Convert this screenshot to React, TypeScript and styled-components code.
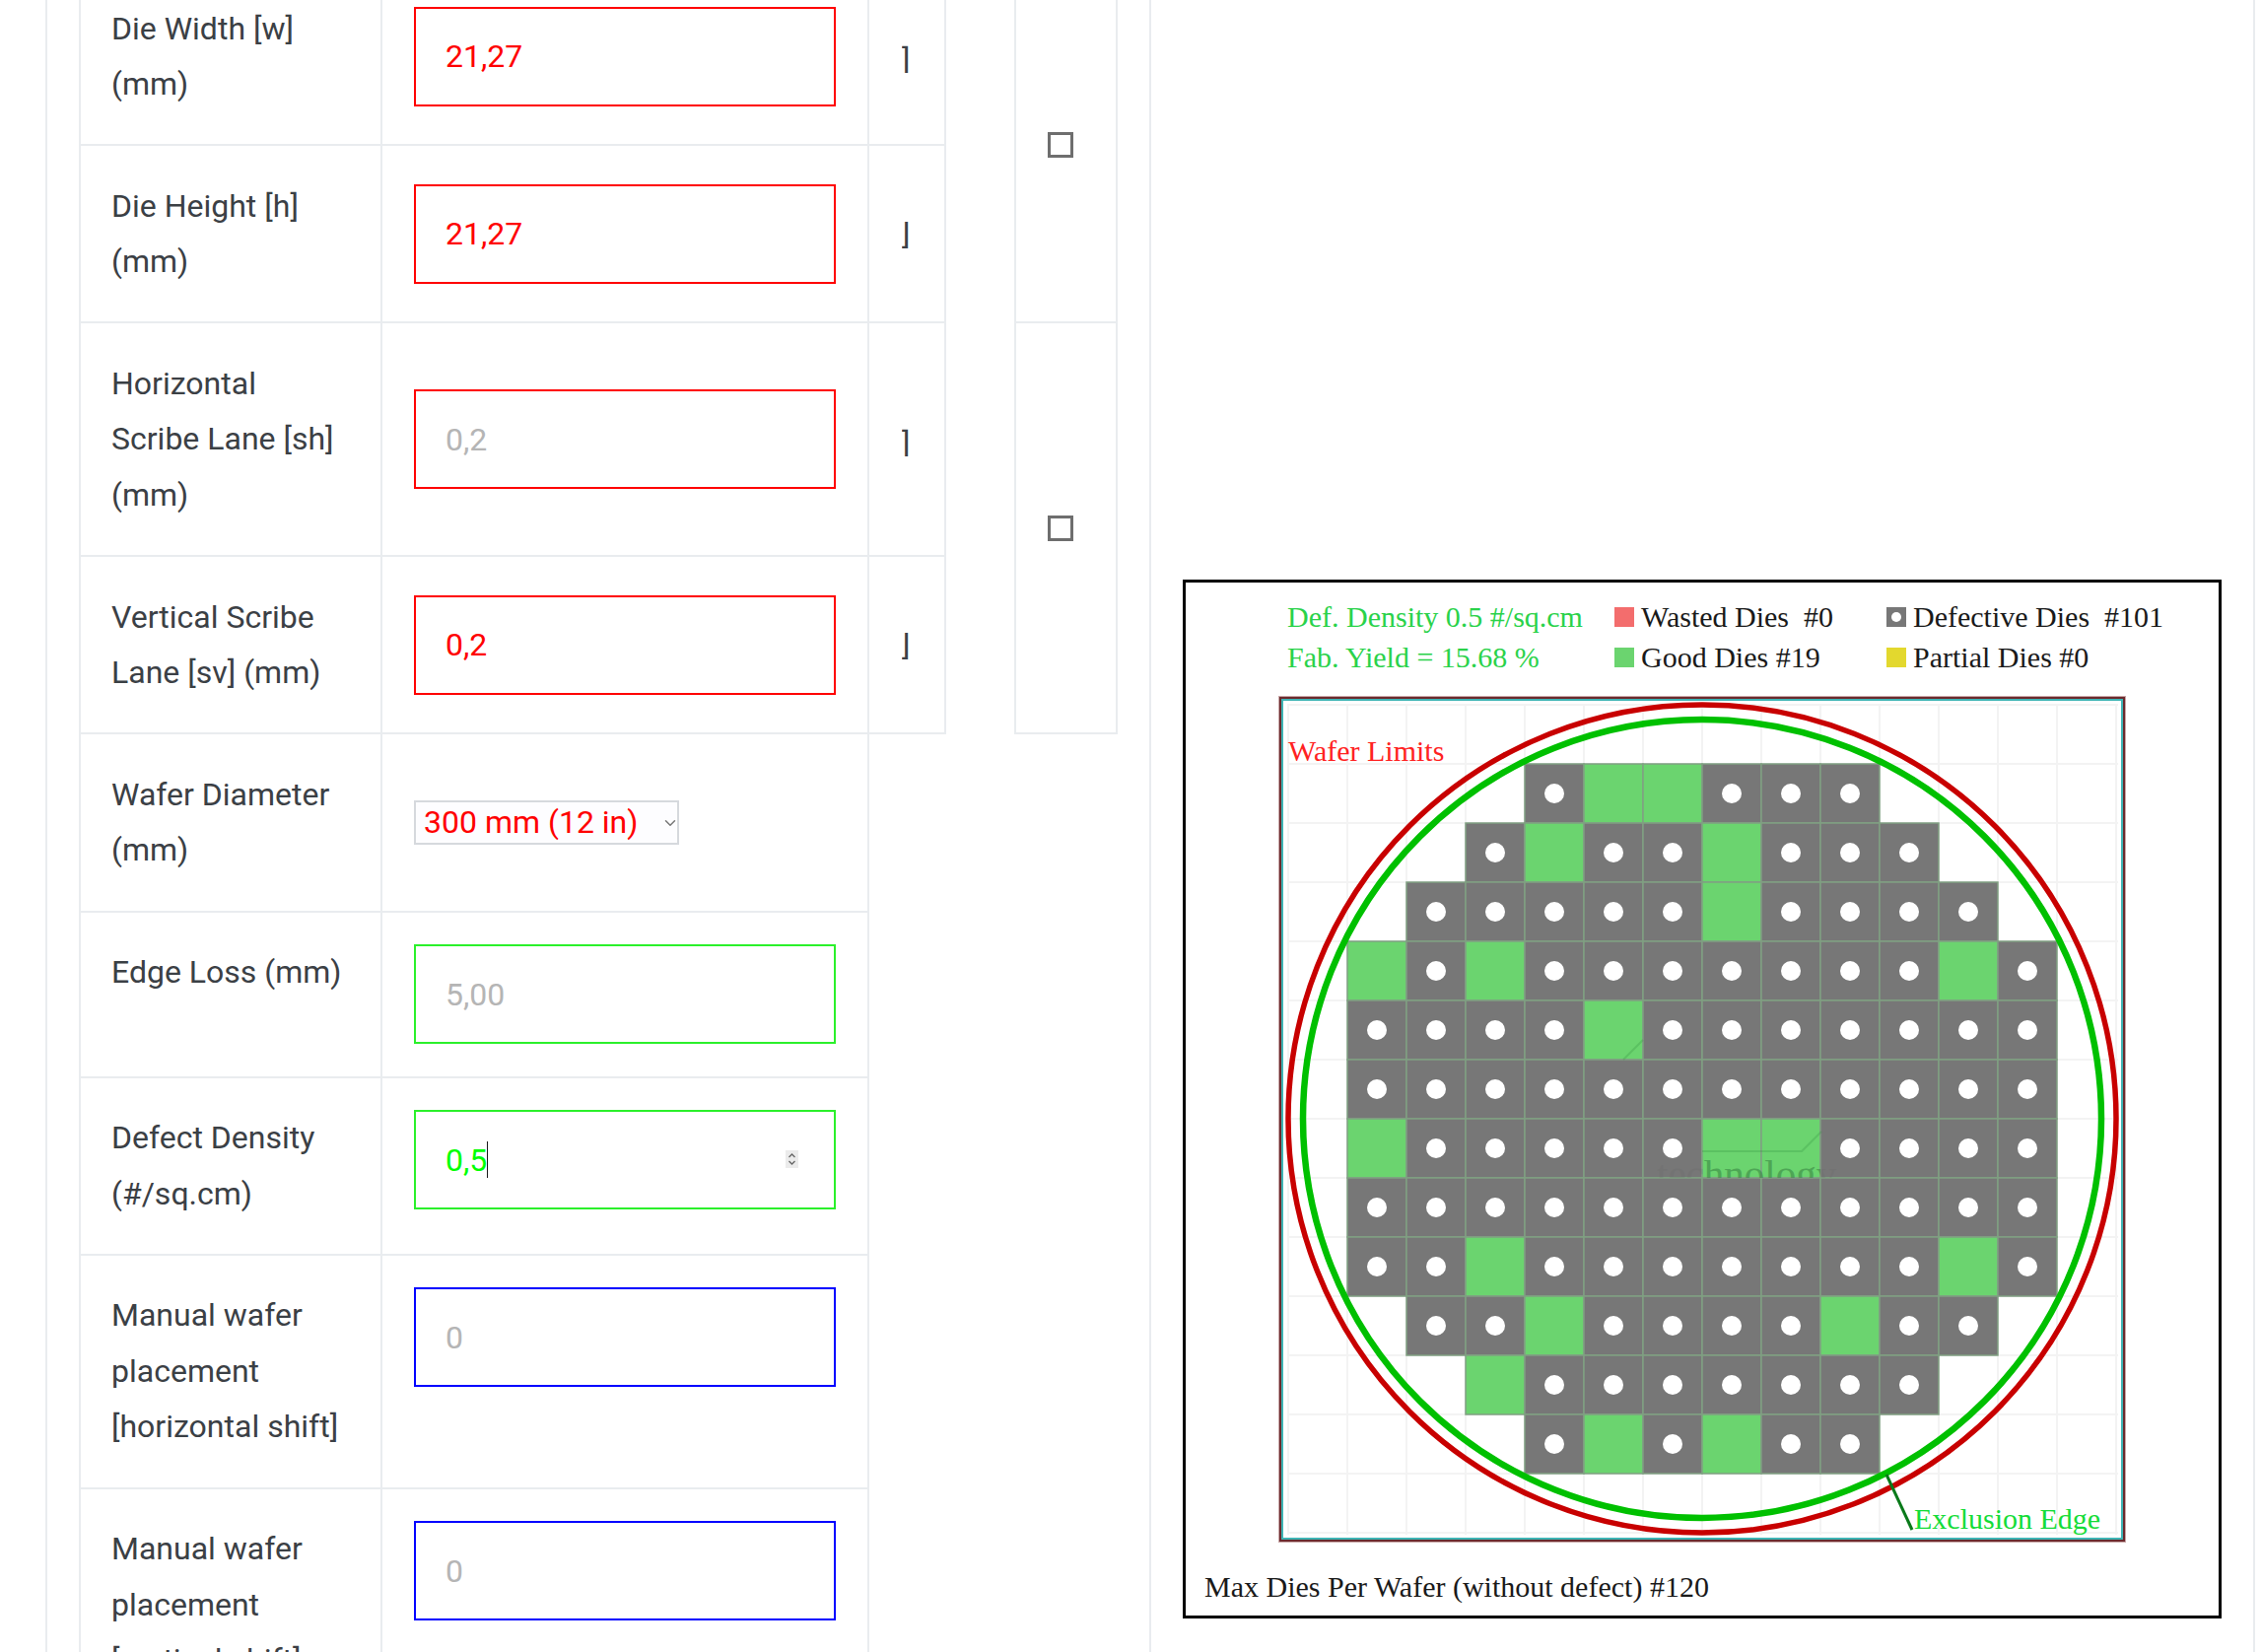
import React from "react";
import styled, { createGlobalStyle } from "styled-components";
import { ChevronDown } from "lucide-react";

const GlobalStyle = createGlobalStyle`
  html, body {
    margin: 0;
    padding: 0;
    background: #fff;
  }
  * {
    box-sizing: border-box;
  }
`;

const LINE = "#e9ecef";

const Page = styled.div`
  display: flex;
  width: 2294px;
  height: 1676px;
  overflow: hidden;
  background: #fff;
  font-family: Roboto, "Liberation Sans", sans-serif;
  font-size: 32px;
  color: #3b4045;
`;

const FormColumn = styled.div`
  width: 1122px;
  height: 100%;
  margin-left: 46px;
  padding-left: 32px;
  border-left: 2px solid ${LINE};
  border-right: 2px solid ${LINE};
`;

const FormGrid = styled.div`
  display: grid;
  grid-template-columns: 308px 494px 78px 69px 105px;
  margin-top: -32px;
`;

const LabelCell = styled.div`
  grid-column: 1;
  padding: 32.5px 31px;
  line-height: 56.6px;
  border-left: 2px solid ${LINE};
  border-right: 2px solid ${LINE};
  border-bottom: 2px solid ${LINE};
`;

const ValueCell = styled.div<{ $top?: boolean }>`
  grid-column: 2;
  display: flex;
  align-items: ${(p) => (p.$top ? "flex-start" : "center")};
  padding: 32.5px 32px;
  border-right: 2px solid ${LINE};
  border-bottom: 2px solid ${LINE};
`;

const UnitCell = styled.div`
  grid-column: 3;
  display: flex;
  align-items: center;
  padding: 5px 0 0 33px;
  border-right: 2px solid ${LINE};
  border-bottom: 2px solid ${LINE};
`;

const Bracket = styled.span`
  display: block;
  height: 29px;
  overflow: hidden;
`;

const BracketGlyph = styled.span<{ $hook: "top" | "bottom" }>`
  display: block;
  line-height: 38px;
  margin-top: ${(p) => (p.$hook === "top" ? "-3px" : "-8px")};
`;

const SideCell = styled.div<{ $row: number }>`
  grid-column: 5;
  grid-row: ${(p) => p.$row} / span 2;
  display: flex;
  align-items: center;
  padding-left: 32px;
  border-left: 2px solid ${LINE};
  border-right: 2px solid ${LINE};
  border-bottom: 2px solid ${LINE};
`;

const CheckBox = styled.span`
  display: block;
  width: 26px;
  height: 26px;
  border: 3px solid #6e6e6e;
`;

const FieldWrap = styled.div`
  position: relative;
  width: 428px;
  height: 101px;
`;

const Field = styled.input<{ $color: string; $text?: string }>`
  display: block;
  width: 100%;
  height: 100%;
  padding: 0 30px;
  border: 2px solid ${(p) => p.$color};
  border-radius: 0;
  outline: none;
  background: #fff;
  font: inherit;
  color: ${(p) => p.$text || p.$color};

  &::placeholder {
    color: #b5b5b5;
    opacity: 1;
  }
`;

const Caret = styled.span`
  position: absolute;
  left: 74px;
  top: 32px;
  width: 1px;
  height: 37px;
  background: #1a1a1a;
`;

const Spinner = styled.svg`
  position: absolute;
  right: 38px;
  top: 41px;
  width: 13px;
  height: 18px;
  background: #ebebeb;
`;

const SelectWrap = styled.div`
  position: relative;
  width: 269px;
  height: 45px;
`;

const WaferSelect = styled.select`
  display: block;
  width: 100%;
  height: 100%;
  padding: 0 0 0 8px;
  border: 2px solid #d6d9dd;
  border-radius: 0;
  outline: none;
  background: #fdfdff;
  appearance: none;
  font: inherit;
  color: #f00;
`;

const SelectArrow = styled(ChevronDown)`
  position: absolute;
  right: 0;
  top: 14px;
  width: 18px;
  height: 18px;
  color: #777;
  pointer-events: none;
`;

const ChartPane = styled.div`
  flex: 1;
  height: 100%;
  padding: 588px 0 0 32px;
  border-right: 2px solid ${LINE};
  margin-right: 6px;
`;

const WaferPanel = styled.div`
  width: 1054px;
  height: 1054px;
  padding-top: 14px;
  border: 3px solid #000;
  font-family: "Liberation Serif", "Times New Roman", serif;
  font-size: 30px;
  color: #1a1a1a;
`;

const Legend = styled.div`
  display: grid;
  grid-template-columns: 332px 276px auto;
  grid-auto-rows: 41.5px;
  margin-left: 103px;
`;

const LegendStat = styled.div`
  display: flex;
  align-items: center;
  color: #2ad24a;
`;

const LegendItem = styled.div`
  display: flex;
  align-items: center;
  gap: 7px;
  white-space: pre;
`;

const Swatch = styled.span<{ $color: string; $dot?: boolean }>`
  position: relative;
  display: block;
  flex: none;
  width: 20px;
  height: 20px;
  background: ${(p) => p.$color};

  &::after {
    content: "";
    display: ${(p) => (p.$dot ? "block" : "none")};
    position: absolute;
    left: 5px;
    top: 5px;
    width: 10px;
    height: 10px;
    border-radius: 50%;
    background: #fff;
  }
`;

const ChartSvg = styled.svg`
  display: block;
  width: 860px;
  height: 859px;
  margin: 18px 0 0 94px;
`;

const Caption = styled.div`
  margin: 27px 0 0 19px;
  line-height: 36px;
`;

// D = defective, G = good, . = off the wafer
const DIE_MAP = [
  "...DGGDDD...",
  "..DGDDGDDD..",
  ".DDDDDGDDDD.",
  "GDGDDDDDDDGD",
  "DDDDGDDDDDDD",
  "DDDDDDDDDDDD",
  "GDDDDDGGDDDD",
  "DDDDDDDDDDDD",
  "DDGDDDDDDDGD",
  ".DDGDDDDGDD.",
  "..GDDDDDDD..",
  "...DGDGDD...",
];

const DIE = 60;
const DIE_X = 70;
const DIE_Y = 69;
const GRID_STEPS = Array.from({ length: 15 }, (_, i) => i);

const WaferChart = () => (
  <ChartSvg viewBox="0 0 860 859">
    <defs>
      <clipPath id="mark-good">
        <rect x="430" y="429" width="120" height="60" />
      </clipPath>
      <clipPath id="mark-row">
        <rect x="0" y="429" width="860" height="60" />
      </clipPath>
    </defs>
    <rect x="1" y="1" width="858" height="857" fill="#fff" stroke="#c9a7a7" strokeWidth="2" />
    <rect x="2" y="2" width="856" height="855" fill="none" stroke="#6b2b2e" strokeWidth="2" />
    <rect x="4" y="4" width="852" height="851" fill="none" stroke="#3eb4b4" strokeWidth="2" />

    {GRID_STEPS.map((i) => (
      <g key={i} stroke="#f3f3f3" strokeWidth="2">
        <line x1={10 + i * DIE} y1="8" x2={10 + i * DIE} y2="851" />
        <line x1="9" y1={9 + i * DIE} x2="852" y2={9 + i * DIE} />
      </g>
    ))}

    {DIE_MAP.map((row, r) =>
      row.split("").map((kind, c) => {
        if (kind === ".") return null;
        const x = DIE_X + c * DIE;
        const y = DIE_Y + r * DIE;
        return (
          <g key={`${r}-${c}`}>
            <rect
              x={x}
              y={y}
              width={DIE}
              height={DIE}
              fill={kind === "G" ? "#6bd46f" : "#777777"}
              stroke="#80a082"
              strokeWidth="1.5"
            />
            {kind === "D" && <circle cx={x + 30} cy={y + 30} r="10" fill="#fff" />}
          </g>
        );
      })
    )}

    <g opacity="0.25" fill="none" stroke="#2c8c3a" strokeWidth="2">
      <path d="M430 462 H531 L551 442" />
      <path d="M350 369 L370 349" />
    </g>
    <g fontFamily="'Liberation Serif', serif" fontSize="41">
      <text x="384" y="499" clipPath="url(#mark-row)" fill="#666" opacity="0.2">
        technology
      </text>
      <text x="384" y="499" clipPath="url(#mark-good)" fill="#2c8c3a" opacity="0.45">
        technology
      </text>
    </g>

    <circle cx="430" cy="429" r="420" fill="none" stroke="#c80000" strokeWidth="5.5" />
    <circle cx="430" cy="429" r="405" fill="none" stroke="#00c000" strokeWidth="6.5" />
    <line x1="617" y1="790" x2="643" y2="846" stroke="#0a7a1a" strokeWidth="3" />

    <text x="10" y="66" fill="#f22" fontFamily="'Liberation Serif', serif" fontSize="30">
      Wafer Limits
    </text>
    <text x="645" y="845" fill="#14dc38" fontFamily="'Liberation Serif', serif" fontSize="30">
      Exclusion Edge
    </text>
  </ChartSvg>
);

type FormRow = {
  label: string;
  value?: string;
  placeholder?: string;
  color: string;
  top?: boolean;
  hook?: "top" | "bottom";
};

const ROWS_BEFORE_SELECT: FormRow[] = [
  { label: "Die Width [w] (mm)", value: "21,27", color: "#f00", hook: "top" },
  { label: "Die Height [h] (mm)", value: "21,27", color: "#f00", hook: "bottom" },
  { label: "Horizontal Scribe Lane [sh] (mm)", placeholder: "0,2", color: "#f00", hook: "top" },
  { label: "Vertical Scribe Lane [sv] (mm)", value: "0,2", color: "#f00", hook: "bottom" },
];

const ROWS_AFTER_SELECT: FormRow[] = [
  { label: "Manual wafer placement [horizontal shift]", placeholder: "0", color: "#00f", top: true },
  { label: "Manual wafer placement [vertical shift]", placeholder: "0", color: "#00f", top: true },
];

const renderRow = (row: FormRow) => (
  <React.Fragment key={row.label}>
    <LabelCell>{row.label}</LabelCell>
    <ValueCell $top={row.top}>
      <FieldWrap>
        <Field $color={row.color} value={row.value} placeholder={row.placeholder} readOnly />
      </FieldWrap>
    </ValueCell>
    {row.hook && (
      <UnitCell>
        <Bracket>
          <BracketGlyph $hook={row.hook}>]</BracketGlyph>
        </Bracket>
      </UnitCell>
    )}
  </React.Fragment>
);

export default function App() {
  return (
    <Page>
      <GlobalStyle />
      <FormColumn>
        <FormGrid>
          <SideCell $row={1}>
            <CheckBox />
          </SideCell>
          <SideCell $row={3}>
            <CheckBox />
          </SideCell>

          {ROWS_BEFORE_SELECT.map(renderRow)}

          <LabelCell>Wafer Diameter (mm)</LabelCell>
          <ValueCell>
            <SelectWrap>
              <WaferSelect defaultValue="300">
                <option value="300">300 mm (12 in)</option>
              </WaferSelect>
              <SelectArrow strokeWidth={2} />
            </SelectWrap>
          </ValueCell>

          <LabelCell>Edge Loss (mm)</LabelCell>
          <ValueCell>
            <FieldWrap>
              <Field $color="#2bf02b" placeholder="5,00" readOnly />
            </FieldWrap>
          </ValueCell>

          <LabelCell>Defect Density (#/sq.cm)</LabelCell>
          <ValueCell $top>
            <FieldWrap>
              <Field $color="#2bf02b" $text="#0f0" value="0,5" readOnly />
              <Caret />
              <Spinner viewBox="0 0 13 18">
                <path d="M3.5 7 L6.5 4 L9.5 7" fill="none" stroke="#666" strokeWidth="1.3" />
                <path d="M3.5 11 L6.5 14 L9.5 11" fill="none" stroke="#666" strokeWidth="1.3" />
              </Spinner>
            </FieldWrap>
          </ValueCell>

          {ROWS_AFTER_SELECT.map(renderRow)}
        </FormGrid>
      </FormColumn>

      <ChartPane>
        <WaferPanel>
          <Legend>
            <LegendStat>Def. Density 0.5 #/sq.cm</LegendStat>
            <LegendItem>
              <Swatch $color="#f36d6d" />
              {"Wasted Dies  #0"}
            </LegendItem>
            <LegendItem>
              <Swatch $color="#777777" $dot />
              {"Defective Dies  #101"}
            </LegendItem>
            <LegendStat>Fab. Yield = 15.68 %</LegendStat>
            <LegendItem>
              <Swatch $color="#6bd46f" />
              Good Dies #19
            </LegendItem>
            <LegendItem>
              <Swatch $color="#e3d82e" />
              Partial Dies #0
            </LegendItem>
          </Legend>
          <WaferChart />
          <Caption>Max Dies Per Wafer (without defect) #120</Caption>
        </WaferPanel>
      </ChartPane>
    </Page>
  );
}
